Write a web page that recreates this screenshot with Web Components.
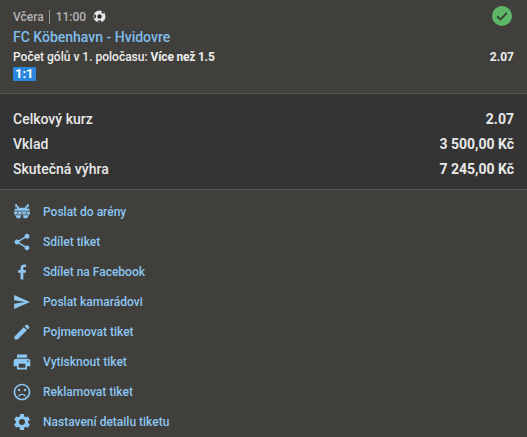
<!DOCTYPE html>
<html lang="cs">
<head>
<meta charset="utf-8">
<title>Tiket</title>
<style>
html, body { margin: 0; padding: 0; background: #403f3b; }
body { font-family: Roboto, "Liberation Sans", sans-serif; }
</style>
</head>
<body>
<ticket-detail>
  <ticket-event slot="event" day="Včera" time="11:00" match="FC Köbenhavn - Hvidovre" market="Počet gólů v 1. poločasu:" pick="Více než 1.5" odds="2.07" score="1:1"></ticket-event>
  <ticket-summary slot="summary">
    <summary-row label="Celkový kurz" value="2.07"></summary-row>
    <summary-row label="Vklad" value="3 500,00 Kč"></summary-row>
    <summary-row label="Skutečná výhra" value="7 245,00 Kč"></summary-row>
  </ticket-summary>
  <action-row icon="arena" label="Poslat do arény"></action-row>
  <action-row icon="share" label="Sdílet tiket"></action-row>
  <action-row icon="facebook" label="Sdílet na Facebook"></action-row>
  <action-row icon="send" label="Poslat kamarádovi"></action-row>
  <action-row icon="edit" label="Pojmenovat tiket"></action-row>
  <action-row icon="print" label="Vytisknout tiket"></action-row>
  <action-row icon="sad" label="Reklamovat tiket"></action-row>
  <action-row icon="settings" label="Nastavení detailu tiketu"></action-row>
</ticket-detail>

<script>
const ICONS = {
  arena: '<path d="M4 2.500h2v2.200h2V7h8V4.700h2V2.500h2v3.700h-2V8h3v2.500H3V8h3V6.200H4z"/><path fill-rule="evenodd" d="M2.500 11.500h19V15h-19zM6 12.500v1.500h1.500v-1.500zM11.200 12.500v1.500h1.600v-1.500zM16.500 12.500v1.500H18v-1.500z"/><path d="M3.500 16h7.500l-1 3.500H6zM13 16h7.500L18 19.500h-4z"/>',
  share: '<path d="M18 16.08c-.76 0-1.44.3-1.96.77L8.91 12.7c.05-.23.09-.46.09-.7s-.04-.47-.09-.7l7.05-4.11c.54.5 1.25.81 2.04.81 1.66 0 3-1.34 3-3s-1.34-3-3-3-3 1.34-3 3c0 .24.04.47.09.7L8.04 9.81C7.5 9.31 6.79 9 6 9c-1.66 0-3 1.34-3 3s1.34 3 3 3c.79 0 1.5-.31 2.04-.81l7.12 4.16c-.05.21-.08.43-.08.65 0 1.61 1.31 2.92 2.92 2.92s2.92-1.31 2.92-2.92-1.31-2.92-2.92-2.92z"/>',
  facebook: '<path d="M13.6 21v-8.2h2.8l.4-3.200h-3.200V7.600c0-.93.26-1.560 1.600-1.560h1.700V3.170C16.600 3.130 15.600 3 14.450 3c-2.470 0-4.150 1.500-4.150 4.270V9.600H7.500v3.200h2.800V21z"/>',
  send: '<path d="M2.500 20.500 21.500 12 2.500 3.500v6.500l13 2-13 2z"/>',
  edit: '<path d="M3 17.250V21h3.750L17.810 9.940l-3.750-3.750L3 17.250zM20.710 7.040a1 1 0 0 0 0-1.410l-2.340-2.340a1 1 0 0 0-1.410 0l-1.830 1.830 3.750 3.750 1.830-1.830z"/>',
  print: '<path d="M19 8H5c-1.660 0-3 1.340-3 3v6h4v4h12v-4h4v-6c0-1.660-1.340-3-3-3zm-3 11H8v-5h8v5zm3-7c-.55 0-1-.45-1-1s.45-1 1-1 1 .45 1 1-.45 1-1 1zm-1-9H6v4h12V3z"/>',
  sad: '<circle cx="15.5" cy="9.5" r="1.5"/><circle cx="8.5" cy="9.5" r="1.5"/><path d="M11.990 2C6.470 2 2 6.480 2 12s4.470 10 9.990 10C17.520 22 22 17.520 22 12S17.520 2 11.990 2zM12 20c-4.420 0-8-3.580-8-8s3.580-8 8-8 8 3.580 8 8-3.580 8-8 8zm0-6c-2.330 0-4.320 1.450-5.120 3.500h1.670c.69-1.190 1.970-2 3.450-2s2.750.81 3.450 2h1.670c-.8-2.050-2.790-3.500-5.120-3.500z"/>',
  settings: '<path d="M19.140 12.940c.04-.3.06-.61.06-.94 0-.32-.02-.64-.07-.94l2.030-1.580a.49.49 0 0 0 .12-.61l-1.920-3.320a.49.49 0 0 0-.59-.22l-2.390.96c-.5-.38-1.030-.7-1.620-.94l-.36-2.540a.48.48 0 0 0-.48-.41h-3.840a.47.47 0 0 0-.47.41l-.36 2.540c-.59.24-1.130.57-1.620.94l-2.390-.96a.48.48 0 0 0-.59.22L2.740 8.870a.47.47 0 0 0 .12.61l2.030 1.580c-.05.3-.09.63-.09.94s.02.64.07.94l-2.030 1.580a.49.49 0 0 0-.12.61l1.920 3.320c.12.22.37.29.59.22l2.390-.96c.5.38 1.030.7 1.620.94l.36 2.540c.05.24.24.41.48.41h3.840c.24 0 .44-.17.47-.41l.36-2.540c.59-.24 1.130-.56 1.620-.94l2.390.96c.22.08.47 0 .59-.22l1.920-3.320a.47.47 0 0 0-.12-.61l-2.010-1.580zM12 15.600A3.600 3.600 0 1 1 12 8.400a3.600 3.600 0 0 1 0 7.200z"/>'
};

class TicketDetail extends HTMLElement {
  constructor() {
    super();
    this.shadow = this.attachShadow({ mode: 'open' });
  }
  connectedCallback() {
    this.shadow.innerHTML = `
      <style>
        :host { display: block; background: #403f3b; height: 437px; overflow: hidden; }
        .actions { display: flex; flex-direction: column; padding-top: 7px; }
      </style>
      <slot name="event"></slot>
      <slot name="summary"></slot>
      <div class="actions"><slot></slot></div>
    `;
  }
}

class TicketEvent extends HTMLElement {
  constructor() {
    super();
    this.shadow = this.attachShadow({ mode: 'open' });
  }
  connectedCallback() {
    const a = n => this.getAttribute(n);
    this.shadow.innerHTML = `
      <style>
        :host { display: block; box-sizing: border-box; height: 94px; padding: 6px 13px 0; border-bottom: 1px solid #555; color: #eee; }
        .head { display: flex; align-items: center; justify-content: space-between; height: 21px; }
        .when { display: flex; align-items: center; font-size: 12px; color: #b4b4b4; font-weight: 500; }
        .sep { width: 1px; height: 14px; background: #9a9a9a; margin: 0 6px 0 5px; }
        .ball { margin-left: 7px; display: block; }
        .check { align-self: flex-start; margin-right: 2px; display: block; }
        .match { font-size: 14px; font-weight: 500; color: #7fbdec; line-height: 18px; margin-top: 1px; }
        .row { display: flex; justify-content: space-between; font-size: 12px; font-weight: 500; line-height: 16px; margin-top: 3px; }
        .row b { font-weight: 700; letter-spacing: -.2px; }
        .odds { font-weight: 700; }
        .score { display: inline-block; background: #2a87dd; color: #fff; font-size: 13px; font-weight: 700; line-height: 14px; padding: 0 2px; border-radius: 1px; margin-top: 2px; vertical-align: top; }
      </style>
      <div class="head">
        <div class="when">
          <span>${a('day')}</span><span class="sep"></span><span>${a('time')}</span>
          <svg class="ball" width="13" height="13" viewBox="0 0 13 13">
            <circle cx="6.5" cy="6.5" r="6" fill="#e6e6e6"/>
            <path d="M6.500 4 8.900 5.800 8 8.500H5L4.100 5.800z" fill="#2b2b2b"/>
            <path d="M8.600 1 11 2.400 10.200 4 8.400 2.600zM1.200 4.800 2.800 4.600 3 7.600 1.400 8.800zM5 10.400H8L8.500 12 6.500 12.600 4.600 12z" fill="#2b2b2b"/>
          </svg>
        </div>
        <svg class="check" width="20" height="20" viewBox="0 0 20 20">
          <circle cx="10" cy="10" r="10" fill="#5cb767"/>
          <path d="M5.200 10.300 8.500 13.500 14.800 6.800" fill="none" stroke="#3a3a38" stroke-width="1.800"/>
        </svg>
      </div>
      <div class="match">${a('match')}</div>
      <div class="row"><span>${a('market')} <b>${a('pick')}</b></span><span class="odds">${a('odds')}</span></div>
      <span class="score">${a('score')}</span>
    `;
  }
}

class TicketSummary extends HTMLElement {
  constructor() {
    super();
    this.shadow = this.attachShadow({ mode: 'open' });
  }
  connectedCallback() {
    this.shadow.innerHTML = `
      <style>
        :host { display: block; box-sizing: border-box; height: 96px; padding: 12px 13px 0; background: #343434; border-bottom: 1px solid #555; }
      </style>
      <slot></slot>
    `;
  }
}

class SummaryRow extends HTMLElement {
  constructor() {
    super();
    this.shadow = this.attachShadow({ mode: 'open' });
  }
  connectedCallback() {
    this.shadow.innerHTML = `
      <style>
        :host { display: flex; justify-content: space-between; align-items: center; height: 25px; font-size: 14px; color: #e8e8e8; }
        .label { font-weight: 500; }
        .value { font-weight: 700; }
      </style>
      <span class="label">${this.getAttribute('label')}</span>
      <span class="value">${this.getAttribute('value')}</span>
    `;
  }
}

class ActionRow extends HTMLElement {
  constructor() {
    super();
    this.shadow = this.attachShadow({ mode: 'open' });
  }
  connectedCallback() {
    this.shadow.innerHTML = `
      <style>
        :host { display: flex; align-items: center; height: 30px; padding-left: 12px; color: #8cc6f2; font-size: 12px; font-weight: 500; }
        svg { display: block; width: 20px; height: 20px; fill: currentColor; flex: none; margin-right: 11px; }
      </style>
      <svg viewBox="0 0 24 24">${ICONS[this.getAttribute('icon')]}</svg>
      <span>${this.getAttribute('label')}</span>
    `;
  }
}

customElements.define('ticket-detail', TicketDetail);
customElements.define('ticket-event', TicketEvent);
customElements.define('ticket-summary', TicketSummary);
customElements.define('summary-row', SummaryRow);
customElements.define('action-row', ActionRow);
</script>
</body>
</html>
